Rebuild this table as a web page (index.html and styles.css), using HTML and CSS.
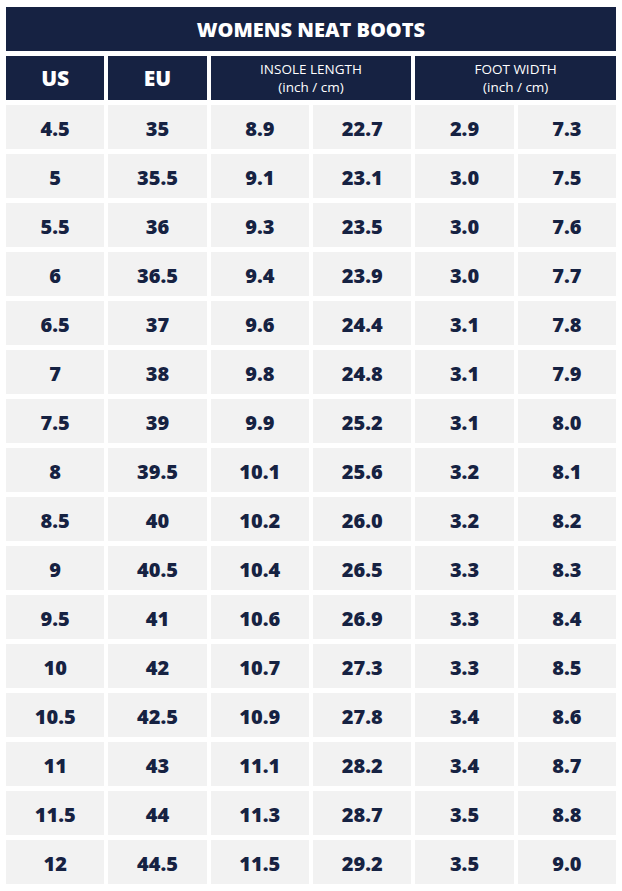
FILE: index.html
```html
<!DOCTYPE html>
<html lang="en">
<head>
<meta charset="utf-8">
<title>Womens Neat Boots</title>
<link rel="stylesheet" href="styles.css">
</head>
<body>
<div class="chart">
  <div class="title">WOMENS NEAT BOOTS</div>
  <div class="head big">US</div>
  <div class="head big">EU</div>
  <div class="head small span2"><span class="line">INSOLE LENGTH</span><span class="line">(inch / cm)</span></div>
  <div class="head small span2"><span class="line">FOOT WIDTH</span><span class="line">(inch / cm)</span></div>

  <div class="cell">4.5</div><div class="cell">35</div><div class="cell">8.9</div><div class="cell">22.7</div><div class="cell">2.9</div><div class="cell">7.3</div>
  <div class="cell">5</div><div class="cell">35.5</div><div class="cell">9.1</div><div class="cell">23.1</div><div class="cell">3.0</div><div class="cell">7.5</div>
  <div class="cell">5.5</div><div class="cell">36</div><div class="cell">9.3</div><div class="cell">23.5</div><div class="cell">3.0</div><div class="cell">7.6</div>
  <div class="cell">6</div><div class="cell">36.5</div><div class="cell">9.4</div><div class="cell">23.9</div><div class="cell">3.0</div><div class="cell">7.7</div>
  <div class="cell">6.5</div><div class="cell">37</div><div class="cell">9.6</div><div class="cell">24.4</div><div class="cell">3.1</div><div class="cell">7.8</div>
  <div class="cell">7</div><div class="cell">38</div><div class="cell">9.8</div><div class="cell">24.8</div><div class="cell">3.1</div><div class="cell">7.9</div>
  <div class="cell">7.5</div><div class="cell">39</div><div class="cell">9.9</div><div class="cell">25.2</div><div class="cell">3.1</div><div class="cell">8.0</div>
  <div class="cell">8</div><div class="cell">39.5</div><div class="cell">10.1</div><div class="cell">25.6</div><div class="cell">3.2</div><div class="cell">8.1</div>
  <div class="cell">8.5</div><div class="cell">40</div><div class="cell">10.2</div><div class="cell">26.0</div><div class="cell">3.2</div><div class="cell">8.2</div>
  <div class="cell">9</div><div class="cell">40.5</div><div class="cell">10.4</div><div class="cell">26.5</div><div class="cell">3.3</div><div class="cell">8.3</div>
  <div class="cell">9.5</div><div class="cell">41</div><div class="cell">10.6</div><div class="cell">26.9</div><div class="cell">3.3</div><div class="cell">8.4</div>
  <div class="cell">10</div><div class="cell">42</div><div class="cell">10.7</div><div class="cell">27.3</div><div class="cell">3.3</div><div class="cell">8.5</div>
  <div class="cell">10.5</div><div class="cell">42.5</div><div class="cell">10.9</div><div class="cell">27.8</div><div class="cell">3.4</div><div class="cell">8.6</div>
  <div class="cell">11</div><div class="cell">43</div><div class="cell">11.1</div><div class="cell">28.2</div><div class="cell">3.4</div><div class="cell">8.7</div>
  <div class="cell">11.5</div><div class="cell">44</div><div class="cell">11.3</div><div class="cell">28.7</div><div class="cell">3.5</div><div class="cell">8.8</div>
  <div class="cell">12</div><div class="cell">44.5</div><div class="cell">11.5</div><div class="cell">29.2</div><div class="cell">3.5</div><div class="cell">9.0</div>
</div>
</body>
</html>
```

FILE: styles.css
```css
html, body {
  margin: 0;
  padding: 0;
  background: #ffffff;
}

body {
  padding: 7px 6px;
  font-family: "Open Sans", "Liberation Sans", sans-serif;
  color: #162242;
}

.chart {
  width: 610px;
  display: grid;
  grid-template-columns: repeat(6, 1fr);
  grid-auto-rows: 44px;
  row-gap: 5px;
  column-gap: 4px;
}

.title {
  grid-column: 1 / -1;
  background: #162242;
  color: #ffffff;
  font-weight: 800;
  font-size: 20px;
  display: flex;
  align-items: center;
  justify-content: center;
  padding-top: 1px;
}

.head {
  background: #162242;
  color: #ffffff;
  display: flex;
  align-items: center;
  justify-content: center;
  text-align: center;
}

.big {
  font-weight: 800;
  font-size: 21px;
}

.small {
  flex-direction: column;
  font-weight: 400;
  font-size: 13.5px;
  line-height: 18.5px;
}

.line {
  display: block;
  white-space: nowrap;
}

.span2 {
  grid-column: span 2;
}

.cell {
  background: #f2f2f2;
  display: flex;
  align-items: center;
  justify-content: center;
  font-weight: 800;
  font-size: 20px;
  padding-top: 2px;
}
```
